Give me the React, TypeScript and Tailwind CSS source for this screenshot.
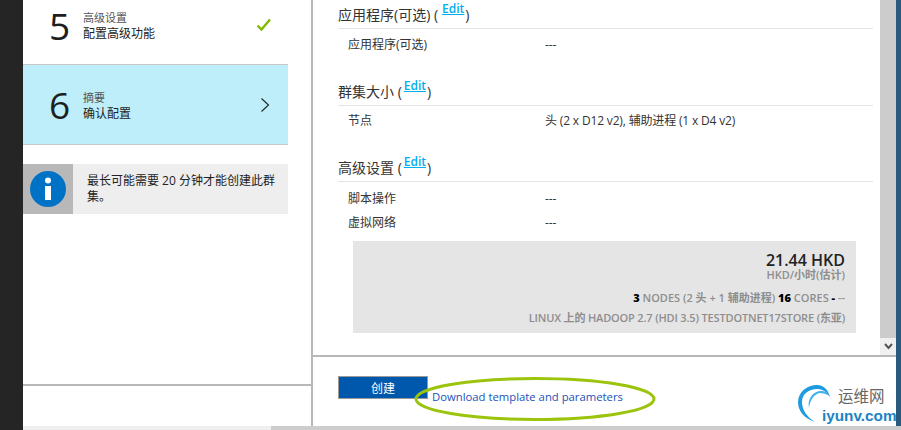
import React from "react";

const F = { fontFamily: '"Open Sans", "Noto Sans CJK SC", sans-serif' };

function Step({ n, t, s, box, numTop, textTop, icon }: { n: string; t: string; s: string; box: string; numTop: string; textTop: string; icon: React.ReactNode }) {
  return (
    <div className={`flex items-start border-b border-[#c8c8c8] pl-[26px] pr-[15px] ${box}`}>
      <div className={`w-[34px] text-[37px] leading-[36px] font-medium text-[#1e1e1e] ${numTop}`}>{n}</div>
      <div className={`flex-1 flex flex-col text-[12px] leading-[16px] text-[#222] ${textTop}`}>
        <span className="text-[11px] text-[#555]">{t}</span>
        <span>{s}</span>
      </div>
      {icon}
    </div>
  );
}

function Row({ k, v }: { k: string; v: string }) {
  return (
    <div className="flex h-[24px] items-center pl-[10px] text-[12px] text-[#333]">
      <span className="w-[197px]">{k}</span>
      <span className="tracking-[-0.16px]">{v}</span>
    </div>
  );
}

function Heading({ t, edit }: { t: string; edit: string }) {
  return (
    <div className="h-[29px] border-b border-[#e4e4e4] flex items-end pb-[3px] text-[14px] leading-[20px] text-[#333]">
      <span>{t} (</span>
      <a className={`text-[12px] leading-[16px] font-semibold text-[#00aef0] underline mb-[8px] mr-[1px] ${edit}`}>Edit</a>
      <span>)</span>
    </div>
  );
}

export default function App() {
  return (
    <div className="relative flex w-[901px] h-[430px] overflow-hidden bg-white" style={F}>
      <div className="w-[23px] bg-[#252525] shrink-0" />
      <div className="flex-1 flex flex-col min-w-0">
        <div className="h-[426px] flex">
          <div className="w-[290px] shrink-0 flex flex-col border-r-2 border-[#b8b8b8]">
            <div className="w-[265px]">
              <Step
                n="5"
                t="高级设置"
                s="配置高级功能"
                box="h-[65px]"
                numTop="mt-[8px]"
                textTop="mt-[10px]"
                icon={
                  <svg width="16" height="14" viewBox="0 0 16 14" className="mr-[1px] mt-[18px]">
                    <path d="M1.5 7.5 L5.5 11.5 L14 1.5" fill="none" stroke="#7fba00" strokeWidth="2.4" />
                  </svg>
                }
              />
              <Step
                n="6"
                t="摘要"
                s="确认配置"
                box="h-[80px] bg-[#bdeefa]"
                numTop="mt-[22px]"
                textTop="mt-[25px]"
                icon={
                  <svg width="10" height="16" viewBox="0 0 10 16" className="mr-[3px] mt-[32px]">
                    <path d="M1.5 1.5 L8.5 8 L1.5 14.5" fill="none" stroke="#222" strokeWidth="1.1" />
                  </svg>
                }
              />
              <div className="mt-[19px] flex h-[50px]">
                <div className="w-[50px] bg-[#b8b8b8] flex items-center justify-center">
                  <svg width="36" height="36" viewBox="0 0 36 36">
                    <circle cx="18" cy="18" r="18" fill="#0072c6" />
                    <circle cx="18" cy="9.5" r="3" fill="#fff" />
                    <rect x="15" y="15" width="6" height="14" fill="#fff" />
                  </svg>
                </div>
                <div className="flex-1 bg-[#eeeeee] pl-[14px] pr-[8px] flex items-center text-[12px] leading-[16px] text-[#222]">
                  最长可能需要 20 分钟才能创建此群集。
                </div>
              </div>
            </div>
            <div className="mt-[170px] border-t-2 border-[#b8b8b8]" />
          </div>
          <div className="flex-1 flex flex-col min-w-0">
            <div className="h-[357px] flex border-b-2 border-[#b8b8b8]">
              <div className="flex-1 pl-[25px] pr-[7px] min-w-0">
                <section className="h-[77px]">
                  <Heading t="应用程序(可选)" edit="ml-[4px]" />
                  <div className="pt-[4px]"><Row k="应用程序(可选)" v="---" /></div>
                </section>
                <section className="h-[76px]">
                  <Heading t="群集大小" edit="ml-[2px]" />
                  <div className="pt-[3px]"><Row k="节点" v="头 (2 x D12 v2), 辅助进程 (1 x D4 v2)" /></div>
                </section>
                <section>
                  <Heading t="高级设置" edit="ml-[2px]" />
                  <div className="pt-[5px]"><Row k="脚本操作" v="---" /><Row k="虚拟网络" v="---" /></div>
                </section>
                <div className="mt-[6px] ml-[15px] mr-[17px] h-[92px] bg-[#e5e5e5] pr-[11px] pt-[11px] flex flex-col items-end text-[11px] font-semibold text-[#8e8e8e]">
                  <div className="text-[16px] leading-[17px] text-[#222]">21.44 HKD</div>
                  <div className="leading-[11px]">HKD/小时(估计)</div>
                  <div className="mt-[10px] leading-[16px]">
                    <b className="text-black">3</b> NODES (2 头 + 1 辅助进程) <b className="text-black">16</b> CORES <b className="text-black">-</b> --
                  </div>
                  <div className="mt-[4px] leading-[16px] tracking-[-0.16px]">LINUX 上的 HADOOP 2.7 (HDI 3.5) TESTDOTNET17STORE (东亚)</div>
                </div>
              </div>
              <div className="w-[16px] flex flex-col shrink-0">
                <div className="flex-1 bg-[#cccccc]" />
                <div className="h-[17px] bg-[#f0f0f0] flex items-center justify-center">
                  <svg width="9" height="7" viewBox="0 0 9 7"><path d="M1 1 L4.5 5 L8 1" fill="none" stroke="#555" strokeWidth="2" /></svg>
                </div>
              </div>
            </div>
            <div className="flex pl-[25px] pt-[19px] items-start">
              <button className="w-[90px] h-[23px] bg-[#0058ad] border border-[#9a9a9a] text-white text-[12px] leading-[16px] pt-[2px]">创建</button>
              <a className="ml-[4px] mt-[13px] text-[11.3px] leading-[16px] text-[#2151b8]">Download template and parameters</a>
            </div>
          </div>
          <div className="w-[5px] shrink-0 bg-[#2a5a7e]" />
        </div>
        <div className="flex-1 flex">
          <div className="w-[248px] bg-[#efefef]" />
          <div className="flex-1 bg-[#cccccc]" />
        </div>
      </div>
      <svg width="244" height="46" viewBox="0 0 244 46" className="absolute left-[413px] top-[376px] pointer-events-none">
        <ellipse cx="122" cy="23" rx="119" ry="20.5" fill="none" stroke="#9cc40c" strokeWidth="3" />
      </svg>
      <div className="absolute left-[797px] top-[381px] w-[99px] h-[45px] pointer-events-none">
        <svg width="44" height="44" viewBox="0 0 44 44" className="absolute left-0 top-0">
          <path d="M18 41 C6 37 1 29 1 21 C1 11 10 4 20 4 C26 4 31 8 33 16 C29 10 25 8 20 8 C12 8 5 13 5 21 C5 29 10 36 18 41 Z" fill="#1f9be0" />
          <path d="M12 27 C10 18 16 10 24 10 C28 10 31 12 33 15 C29 13 26 12 23 12 C17 13 13 19 12 27 Z" fill="#3fb0ea" />
        </svg>
        <span className="absolute left-[41px] top-[5px] text-[15.5px] leading-[20px] text-[#666]">运维网</span>
        <span className="absolute left-[25px] top-[26px] text-[15.3px] leading-[18px] font-bold text-[#1a84c4]" style={{ fontFamily: '"Liberation Sans", sans-serif' }}>iyunv.com</span>
      </div>
    </div>
  );
}
